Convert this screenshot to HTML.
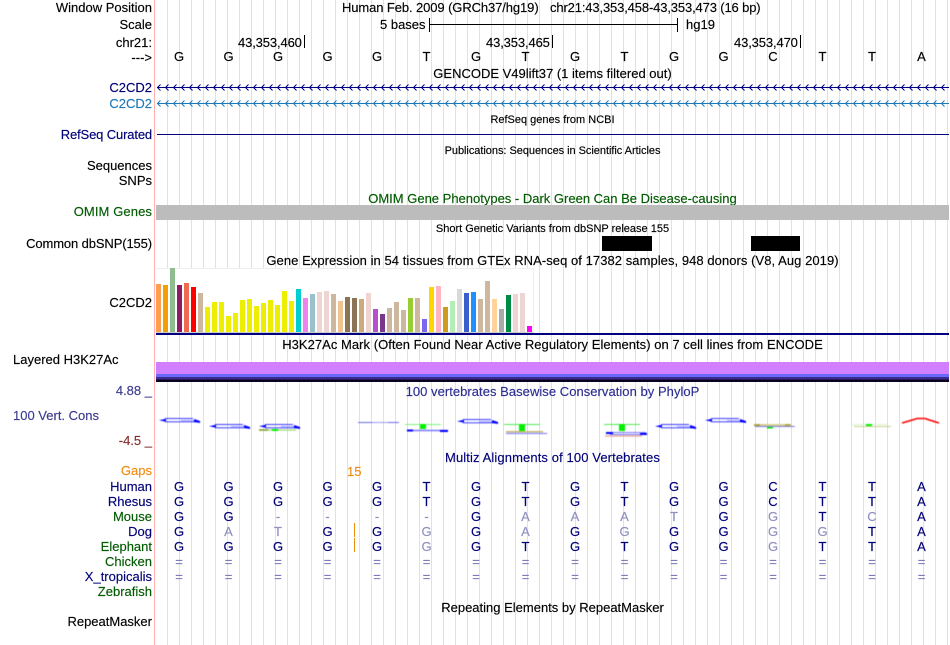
<!DOCTYPE html>
<html>
<head>
<meta charset="utf-8">
<style>
html,body{margin:0;padding:0;background:#fff}
#p{position:relative;width:950px;height:645px;overflow:hidden;background:#fff;font-family:"Liberation Sans",sans-serif;font-size:13px;color:#000}
#g{position:absolute;left:156px;top:0;width:793px;height:645px;background:repeating-linear-gradient(90deg,transparent 0,transparent 11px,#dedef8 11px,#dedef8 12px,transparent 12px)}
#red{position:absolute;left:154px;top:0;width:1px;height:645px;background:#ffb0b0}
.l,.c,.t{position:absolute;line-height:16px;white-space:nowrap;filter:blur(.35px);-webkit-text-stroke:.15px currentColor}
.l{right:798px;text-align:right}
.c{left:156px;width:793px;text-align:center}
.s{font-size:11px}
.n{color:#000078}
.gr{color:#005a00}
.r{position:absolute;left:154.25px;display:flex;line-height:16px;font-size:13px;filter:blur(.35px);-webkit-text-stroke:.15px currentColor}
.r span{width:49.5px;text-align:center;display:block}
.k{color:#000}
.d{color:#000078}
.f{color:#9090c0}
.e{color:#7c7cb8}
.b{position:absolute}
.rl{letter-spacing:-.13px}
#cons{filter:blur(.4px)}
</style>
</head>
<body>
<div id="p">
<div id="g"></div>
<div id="red"></div>

<div class="l" style="top:0">Window Position</div>
<div class="l" style="top:17px">Scale</div>
<div class="l" style="top:35px">chr21:</div>
<div class="l" style="top:50px">---&gt;</div>
<div class="l n" style="top:80px">C2CD2</div>
<div class="l" style="top:96px;color:#1f78b8">C2CD2</div>
<div class="l n" style="top:127px;letter-spacing:-.14px">RefSeq Curated</div>
<div class="l" style="top:158px">Sequences</div>
<div class="l" style="top:173px">SNPs</div>
<div class="l gr" style="top:204px;letter-spacing:.1px">OMIM Genes</div>
<div class="l" style="top:236px;letter-spacing:-.12px">Common dbSNP(155)</div>
<div class="l" style="top:295px">C2CD2</div>
<div class="t" style="left:13px;top:352px">Layered H3K27Ac</div>
<div class="l" style="top:383px;color:#3c3c90">4.88 _</div>
<div class="t" style="left:13px;top:408px;color:#3c3c90">100 Vert. Cons</div>
<div class="l" style="top:433px;color:#842c2c">-4.5 _</div>
<div class="l" style="top:463px;color:#f28a10">Gaps</div>
<div class="l n" style="top:479px">Human</div>
<div class="l n" style="top:494px">Rhesus</div>
<div class="l gr" style="top:509px">Mouse</div>
<div class="l n" style="top:524px">Dog</div>
<div class="l gr" style="top:539px">Elephant</div>
<div class="l gr" style="top:554px">Chicken</div>
<div class="l n" style="top:569px">X_tropicalis</div>
<div class="l gr" style="top:584px">Zebrafish</div>
<div class="l" style="top:614px">RepeatMasker</div>

<div class="t" style="left:342px;top:0;letter-spacing:-.1px">Human Feb. 2009 (GRCh37/hg19)</div>
<div class="t" style="left:550px;top:0;letter-spacing:-.14px">chr21:43,353,458-43,353,473 (16 bp)</div>
<div class="t" style="left:380px;top:17px">5 bases</div>
<div class="t" style="left:686px;top:17px">hg19</div>
<div class="t rl" style="left:238px;top:35px">43,353,460</div>
<div class="t rl" style="left:486px;top:35px">43,353,465</div>
<div class="t rl" style="left:734px;top:35px">43,353,470</div>
<div class="c" style="top:66px">GENCODE V49lift37 (1 items filtered out)</div>
<div class="c s" style="top:112px">RefSeq genes from NCBI</div>
<div class="c s" style="top:143px;letter-spacing:-.04px">Publications: Sequences in Scientific Articles</div>
<div class="c gr" style="top:191px">OMIM Gene Phenotypes - Dark Green Can Be Disease-causing</div>
<div class="c s" style="top:221px">Short Genetic Variants from dbSNP release 155</div>
<div class="c" style="top:253px;letter-spacing:.055px">Gene Expression in 54 tissues from GTEx RNA-seq of 17382 samples, 948 donors (V8, Aug 2019)</div>
<div class="c" style="top:337px;letter-spacing:.035px">H3K27Ac Mark (Often Found Near Active Regulatory Elements) on 7 cell lines from ENCODE</div>
<div class="c" style="top:384px;color:#2e2e90;letter-spacing:.04px">100 vertebrates Basewise Conservation by PhyloP</div>
<div class="c n" style="top:450px;letter-spacing:.11px">Multiz Alignments of 100 Vertebrates</div>
<div class="c" style="top:600px">Repeating Elements by RepeatMasker</div>
<div class="t" style="left:347px;top:464px;color:#f28a10">15</div>

<div class="b" style="left:156px;top:205px;width:793px;height:15px;background:#bcbcbc"></div>
<div class="b" style="left:602px;top:236px;width:50px;height:15px;background:#000"></div>
<div class="b" style="left:751px;top:236px;width:49px;height:15px;background:#000"></div>

<svg class="b" style="left:0;top:0" width="950" height="645" viewBox="0 0 950 645">
<defs>
<pattern id="a1" x="157" y="82" width="8" height="12" patternUnits="userSpaceOnUse"><path d="M3.5 2.5L0.5 5.5L3.5 8.5" fill="none" stroke="#000080" stroke-width="1"/></pattern>
<pattern id="a2" x="157" y="98" width="8" height="12" patternUnits="userSpaceOnUse"><path d="M3.5 2.5L0.5 5.5L3.5 8.5" fill="none" stroke="#1f78b8" stroke-width="1"/></pattern>
<g id="lens">
<path d="M159 420.3L166 418.8V421.8Z" fill="#0000ff"/>
<rect x="165" y="418" width="28" height="1" fill="#3a3aff"/>
<rect x="165" y="421.3" width="31" height="1" fill="#3a3aff"/>
<rect x="181" y="420" width="13" height="1" fill="#a8a8ff"/>
<path d="M194 419L200 421V423L194 422Z" fill="#0000ff"/>
</g>
</defs>
<path d="M429.5 18V32M429.5 24.5H677.5M677.5 18V32M304.5 35V48M552.5 35V48M800.5 35V48" stroke="#000" stroke-width="1" fill="none"/>
<rect x="157" y="82" width="792" height="12" fill="url(#a1)"/>
<rect x="157" y="98" width="792" height="12" fill="url(#a2)"/>
<path d="M157 87.5H949" stroke="#000080"/>
<path d="M157 103.5H949" stroke="#1f78b8"/>
<path d="M157 134.5H949" stroke="#000080"/>

<rect x="156" y="268" width="378" height="67" fill="#fff"/>
<path d="M156.5 268.5H533.5V333" fill="none" stroke="#eeeeee"/>
<path d="M156 332.5H533" stroke="#cccccc"/>
<g>
<rect x="156" y="284" width="5" height="48" fill="#ff9e4e"/>
<rect x="163" y="285" width="5" height="47" fill="#f0a000"/>
<rect x="170" y="268" width="5" height="64" fill="#8fbc8f"/>
<rect x="177" y="285" width="5" height="47" fill="#8b1a62"/>
<rect x="184" y="283" width="5" height="49" fill="#ee6a50"/>
<rect x="191" y="287" width="5" height="45" fill="#ff0000"/>
<rect x="198" y="293" width="5" height="39" fill="#cdb79e"/>
<rect x="205" y="307" width="5" height="25" fill="#eeee00"/>
<rect x="212" y="302" width="5" height="30" fill="#eeee00"/>
<rect x="219" y="302" width="5" height="30" fill="#eeee00"/>
<rect x="226" y="316" width="5" height="16" fill="#eeee00"/>
<rect x="233" y="313" width="5" height="19" fill="#eeee00"/>
<rect x="240" y="300" width="5" height="32" fill="#eeee00"/>
<rect x="247" y="299" width="5" height="33" fill="#eeee00"/>
<rect x="254" y="306" width="5" height="26" fill="#eeee00"/>
<rect x="261" y="303" width="5" height="29" fill="#eeee00"/>
<rect x="268" y="300" width="5" height="32" fill="#eeee00"/>
<rect x="275" y="305" width="5" height="27" fill="#eeee00"/>
<rect x="282" y="291" width="5" height="41" fill="#eeee00"/>
<rect x="289" y="301" width="5" height="31" fill="#eeee00"/>
<rect x="296" y="289" width="5" height="43" fill="#00cdcd"/>
<rect x="303" y="298" width="5" height="34" fill="#ee82ee"/>
<rect x="310" y="294" width="5" height="38" fill="#9ac0cd"/>
<rect x="317" y="292" width="5" height="40" fill="#eed5d2"/>
<rect x="324" y="291" width="5" height="41" fill="#eed5d2"/>
<rect x="331" y="294" width="5" height="38" fill="#cdb79e"/>
<rect x="338" y="301" width="5" height="31" fill="#eec591"/>
<rect x="345" y="297" width="5" height="35" fill="#8b7355"/>
<rect x="352" y="298" width="5" height="34" fill="#8b7355"/>
<rect x="359" y="299" width="5" height="33" fill="#cdaa7d"/>
<rect x="366" y="293" width="5" height="39" fill="#eed5d2"/>
<rect x="373" y="309" width="5" height="23" fill="#b452cd"/>
<rect x="380" y="314" width="5" height="18" fill="#7a378b"/>
<rect x="387" y="308" width="5" height="24" fill="#cdb79e"/>
<rect x="394" y="302" width="5" height="30" fill="#cdb79e"/>
<rect x="401" y="310" width="5" height="22" fill="#cdb79e"/>
<rect x="408" y="298" width="5" height="34" fill="#9acd32"/>
<rect x="415" y="298" width="5" height="34" fill="#cdb79e"/>
<rect x="422" y="319" width="5" height="13" fill="#7b68ee"/>
<rect x="429" y="287" width="5" height="45" fill="#ffd700"/>
<rect x="436" y="286" width="5" height="46" fill="#ffb6c1"/>
<rect x="443" y="307" width="5" height="25" fill="#cd9b1d"/>
<rect x="450" y="301" width="5" height="31" fill="#b4eeb4"/>
<rect x="457" y="289" width="5" height="43" fill="#d9d9d9"/>
<rect x="464" y="293" width="5" height="39" fill="#3a5fcd"/>
<rect x="471" y="292" width="5" height="40" fill="#1e90ff"/>
<rect x="478" y="299" width="5" height="33" fill="#cdb79e"/>
<rect x="485" y="281" width="5" height="51" fill="#cdb79e"/>
<rect x="492" y="299" width="5" height="33" fill="#ffd39b"/>
<rect x="499" y="309" width="5" height="23" fill="#aaaaaa"/>
<rect x="506" y="295" width="5" height="37" fill="#008b45"/>
<rect x="513" y="294" width="5" height="38" fill="#eed5d2"/>
<rect x="520" y="293" width="5" height="39" fill="#eed5d2"/>
<rect x="527" y="326" width="5" height="6" fill="#ff00ff"/>
</g>
<rect x="156" y="333" width="793" height="2" fill="#000080"/>

<rect x="156" y="362" width="793" height="12" fill="#d27fff"/>
<rect x="156" y="374" width="793" height="3" fill="#6a68ff"/>
<rect x="156" y="377" width="793" height="2.5" fill="#3f2a90"/>
<rect x="156" y="379.5" width="793" height="2.5" fill="#0a0420"/>

<!-- conservation -->
<g id="cons">
<use href="#lens"/>
<use href="#lens" transform="translate(50,6)"/>
<use href="#lens" transform="translate(100,6)"/>
<use href="#lens" transform="translate(298,1)"/>
<use href="#lens" transform="translate(496,6)"/>
<use href="#lens" transform="translate(546,0)"/>
<g fill="none">
<path d="M259 430H296" stroke="#a8e088" stroke-width="1.5"/>
<path d="M259 430H268" stroke="#8a9a30" stroke-width="1.5"/>
<path d="M358 422.5H399" stroke="#9c9cf4" stroke-width="1"/>
<path d="M358 422.5H372M388 422.5H399" stroke="#6c6ce8" stroke-width="1"/>
<path d="M405 424.5H441" stroke="#80f080" stroke-width="1"/>
<path d="M407 430.5H448" stroke="#7a7aff" stroke-width="1.5"/>
<path d="M407 430.5H413M440 431H448" stroke="#0000ff" stroke-width="2"/>
<path d="M504 424.5H540" stroke="#50e850" stroke-width="1"/>
<path d="M506 431.8H543" stroke="#c8b870" stroke-width="1.5"/>
<path d="M506 433.5H547" stroke="#8888ff" stroke-width="1.2"/>
<path d="M604 424.5H640" stroke="#50e850" stroke-width="1"/>
<path d="M606 432.5H646M610 434.5H646" stroke="#7a7aff" stroke-width="1"/>
<path d="M606 433H613M640 434H647" stroke="#0000ff" stroke-width="2"/>
<path d="M605 436H642" stroke="#e8b0a0" stroke-width="1.5"/>
<path d="M754 425H792" stroke="#d8d090" stroke-width="2"/>
<path d="M754 425H760M785 425H790" stroke="#b0a840" stroke-width="2"/>
<path d="M755 426.5H795" stroke="#7c7ce4" stroke-width="1"/>
<path d="M852 424.5H887" stroke="#d8f4d0" stroke-width="1"/>
<path d="M854 426.5H891" stroke="#c8d090" stroke-width="1"/>
<path d="M902 423L914 419.5L917 418.5H925L928 419.5L939 423" stroke="#ff0000" stroke-width="1.6"/>
</g>
<g fill="#00f000">
<rect x="272" y="429" width="6" height="2"/>
<rect x="420" y="424" width="6" height="5"/>
<rect x="519" y="424" width="6" height="7"/>
<rect x="619" y="424" width="6" height="7"/>
<rect x="767" y="427" width="6" height="1.5"/>
<rect x="866" y="424" width="6" height="2"/>
</g>
</g>
<path d="M354.5 523V537M354.5 538V552" stroke="#e8900c" stroke-width="1"/>
</svg>

<div class="r k" style="top:49px"><span>G</span><span>G</span><span>G</span><span>G</span><span>G</span><span>T</span><span>G</span><span>T</span><span>G</span><span>T</span><span>G</span><span>G</span><span>C</span><span>T</span><span>T</span><span>A</span></div>
<div class="r d" style="top:479px"><span>G</span><span>G</span><span>G</span><span>G</span><span>G</span><span>T</span><span>G</span><span>T</span><span>G</span><span>T</span><span>G</span><span>G</span><span>C</span><span>T</span><span>T</span><span>A</span></div>
<div class="r d" style="top:494px"><span>G</span><span>G</span><span>G</span><span>G</span><span>G</span><span>T</span><span>G</span><span>T</span><span>G</span><span>T</span><span>G</span><span>G</span><span>C</span><span>T</span><span>T</span><span>A</span></div>
<div class="r d" style="top:509px"><span>G</span><span>G</span><span class="f">-</span><span class="f">-</span><span class="f">-</span><span class="f">-</span><span>G</span><span class="f">A</span><span class="f">A</span><span class="f">A</span><span class="f">T</span><span>G</span><span class="f">G</span><span>T</span><span class="f">C</span><span>A</span></div>
<div class="r d" style="top:524px"><span>G</span><span class="f">A</span><span class="f">T</span><span>G</span><span>G</span><span class="f">G</span><span>G</span><span class="f">A</span><span>G</span><span class="f">G</span><span>G</span><span>G</span><span class="f">G</span><span class="f">G</span><span>T</span><span>A</span></div>
<div class="r d" style="top:539px"><span>G</span><span>G</span><span>G</span><span>G</span><span>G</span><span class="f">G</span><span>G</span><span>T</span><span>G</span><span>T</span><span>G</span><span>G</span><span class="f">G</span><span>T</span><span>T</span><span>A</span></div>
<div class="r e" style="top:554px"><span>=</span><span>=</span><span>=</span><span>=</span><span>=</span><span>=</span><span>=</span><span>=</span><span>=</span><span>=</span><span>=</span><span>=</span><span>=</span><span>=</span><span>=</span><span>=</span></div>
<div class="r e" style="top:569px"><span>=</span><span>=</span><span>=</span><span>=</span><span>=</span><span>=</span><span>=</span><span>=</span><span>=</span><span>=</span><span>=</span><span>=</span><span>=</span><span>=</span><span>=</span><span>=</span></div>
</div>
</body>
</html>
